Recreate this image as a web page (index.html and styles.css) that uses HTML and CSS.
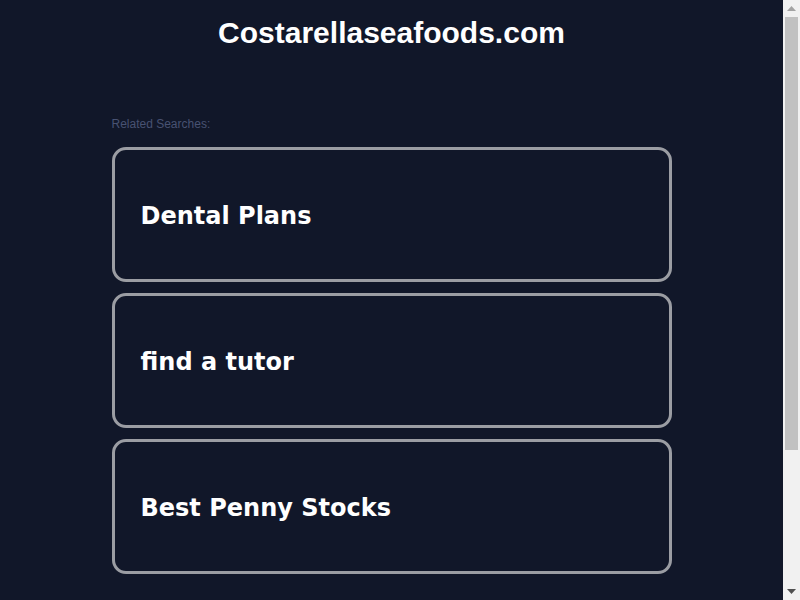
FILE: index.html
```html
<!DOCTYPE html>
<html lang="en">
<head>
    <meta charset="UTF-8">
    <meta name="viewport" content="width=device-width, initial-scale=1.0">
    <title>Costarellaseafoods.com</title>
    <link rel="stylesheet" href="styles.css">
</head>
<body>

    <div class="page">
        <h1 class="site-title">Costarellaseafoods.com</h1>

        <div class="container">
            <p class="related-label">Related Searches:</p>

            <a class="search-card" href="#">Dental Plans</a>
            <a class="search-card" href="#">find a tutor</a>
            <a class="search-card" href="#">Best Penny Stocks</a>
        </div>
    </div>

    <div class="scrollbar">
        <div class="scroll-btn">
            <svg width="9" height="5" viewBox="0 0 9 5"><polygon points="4.5,0 9,5 0,5" fill="#a3a3a3"/></svg>
        </div>
        <div class="scroll-track">
            <div class="scroll-thumb"></div>
        </div>
        <div class="scroll-btn">
            <svg width="9" height="5" viewBox="0 0 9 5"><polygon points="0,0 9,0 4.5,5" fill="#505050"/></svg>
        </div>
    </div>

</body>
</html>
```

FILE: styles.css
```css
html, body {
    overflow: hidden;
}

body {
    font-family: "Liberation Sans", Arial, sans-serif;
    background-color: #111729;
    color: white;
    margin: 0;
    padding: 0;
}

.page {
    margin-right: 17px;
    padding-bottom: 200px;
}

.site-title {
    font-size: 30px;
    line-height: 35px;
    font-weight: bold;
    text-align: center;
    margin: 15px 0 0 0;
}

.container {
    width: 560px;
    margin: 67px auto 0 auto;
}

.related-label {
    font-size: 12px;
    line-height: 14px;
    color: #485272;
    margin: 0 0 16px 0;
}

.search-card {
    display: flex;
    align-items: center;
    box-sizing: border-box;
    height: 135px;
    margin-bottom: 11px;
    padding: 2px 26px 0 26px;
    border: 3px solid #9b9da3;
    border-radius: 14px;
    font-family: "DejaVu Sans", Verdana, sans-serif;
    font-size: 24px;
    font-weight: bold;
    color: white;
    text-decoration: none;
}

.scrollbar {
    position: fixed;
    top: 0;
    right: 0;
    width: 17px;
    height: 100vh;
    background-color: #f1f1f1;
    display: flex;
    flex-direction: column;
}

.scroll-btn {
    height: 17px;
    display: flex;
    align-items: center;
    justify-content: center;
}

.scroll-track {
    flex: 1;
    padding: 0 2px;
}

.scroll-thumb {
    height: 433px;
    background-color: #c1c1c1;
}
```
